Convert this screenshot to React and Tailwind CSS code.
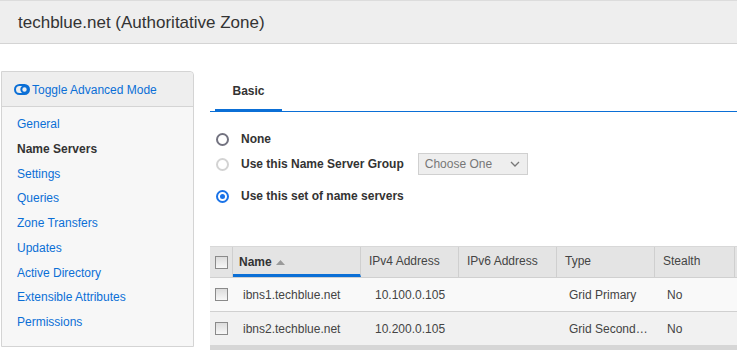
const navItems = [
  "General",
  "Name Servers",
  "Settings",
  "Queries",
  "Zone Transfers",
  "Updates",
  "Active Directory",
  "Extensible Attributes",
  "Permissions",
];

const columns = [
  ["IPv4 Address", "w-[98px]"],
  ["IPv6 Address", "w-[98px]"],
  ["Type", "w-[98px]"],
  ["Stealth", "w-[80px]"],
];

const rows = [
  ["ibns1.techblue.net", "10.100.0.105", "", "Grid Primary", "No", "bg-[#f9f9f9]"],
  ["ibns2.techblue.net", "10.200.0.105", "", "Grid Second…", "No", "bg-[#f1f1f1]"],
];

const Checkbox = () => (
  <span className="block w-[13px] h-[13px] border border-[#8a8a8a] bg-gradient-to-b from-[#dcdcdc] to-[#f7f7f7]" />
);

const Radio = ({ state }) => {
  if (state === "checked")
    return (
      <span className="flex items-center justify-center w-[13px] h-[13px] rounded-full border-2 border-[#1a73e8]">
        <span className="w-[5px] h-[5px] rounded-full bg-[#1a73e8]" />
      </span>
    );
  if (state === "disabled")
    return <span className="block w-[13px] h-[13px] rounded-full border-2 border-[#d3d3d3]" />;
  return <span className="block w-[13px] h-[13px] rounded-full border-2 border-[#737380]" />;
};

const ToggleIcon = () => (
  <svg width="16" height="11" viewBox="0 0 16 11" className="mr-[2px]">
    <rect x="1" y="1" width="14" height="9" rx="4.5" fill="none" stroke="#0b6fd6" strokeWidth="2" />
    <circle cx="10.5" cy="5.5" r="3.2" fill="none" stroke="#0b6fd6" strokeWidth="2" />
  </svg>
);

export default function App() {
  return (
    <div className="w-[737px] h-[350px] overflow-hidden bg-white text-[#333] font-['Liberation_Sans',Arial,sans-serif]">
      {/* header */}
      <div className="h-[44px] bg-[#eeeeee] border-t border-[#dcdcdc] border-b border-b-[#d4d4d4] flex items-center pl-[18px]">
        <h1 className="text-[17px] text-[#333] leading-none">techblue.net (Authoritative Zone)</h1>
      </div>

      <div className="flex">
        {/* sidebar */}
        <div className="ml-[1px] mt-[27px] w-[193px] h-[276px] border border-[#d4d4d4] rounded-tr-[4px] bg-[#f7f7f7] shrink-0">
          <div className="h-[35px] bg-[#eeeeee] border-b border-[#d4d4d4] flex items-center pl-[12px] pt-[1px] text-[12px] text-[#0b6fd6] rounded-tr-[4px]">
            <ToggleIcon />
            Toggle Advanced Mode
          </div>
          <ul className="pt-[8px] pl-[15px] text-[12px]">
            {navItems.map((item) => (
              <li
                key={item}
                className={
                  "h-[24.75px] leading-[18px] " +
                  (item === "Name Servers" ? "font-bold text-[#333]" : "text-[#0b6fd6]")
                }
              >
                {item}
              </li>
            ))}
          </ul>
        </div>

        {/* main */}
        <div className="ml-[16px] flex-1 min-w-0">
          <div className="mt-[36px] h-[32px] border-b border-[#0b6fd6] flex items-end">
            <div className="ml-[5px] w-[67px] h-[32px] flex items-start justify-center border-b-[2px] border-[#0b6fd6] text-[12px] font-bold pt-[3px]">
              Basic
            </div>
          </div>

          <div className="pl-[6px] pt-[18px] text-[12px] font-bold">
            <div className="flex items-center gap-[12px] h-[18px]">
              <Radio />
              <span>None</span>
            </div>
            <div className="flex items-center gap-[12px] h-[22px] mt-[5px]">
              <Radio state="disabled" />
              <span>Use this Name Server Group</span>
              <div className="ml-[2px] w-[110px] h-[22px] bg-[#eeeeee] border border-[#d0d0d0] flex items-center justify-between pl-[6px] pr-[7px] font-normal text-[#777]">
                <span>Choose One</span>
                <svg width="10" height="6" viewBox="0 0 10 6">
                  <path d="M1 1 L5 5 L9 1" fill="none" stroke="#777" strokeWidth="1.3" />
                </svg>
              </div>
            </div>
            <div className="flex items-center gap-[12px] h-[18px] mt-[12px]">
              <Radio state="checked" />
              <span>Use this set of name servers</span>
            </div>
          </div>

          {/* table */}
          <div className="mt-[41px] text-[12px]">
            <div className="flex h-[31px] bg-[#e4e4e4] border-t border-[#d8d8d8]">
              <div className="w-[23px] flex items-center justify-center border-r border-[#cfcfcf]">
                <Checkbox />
              </div>
              <div className="w-[128px] flex items-center pl-[6px] font-bold border-r border-[#cfcfcf] border-b-[3px] border-b-[#0b6fd6] pt-[3px]">
                Name
                <svg width="9" height="6" viewBox="0 0 9 6" className="ml-[4px]">
                  <path d="M0 6 L4.5 1 L9 6 Z" fill="#9a9a9a" />
                </svg>
              </div>
              {columns.map(([label, w]) => (
                <div key={label} className={w + " flex items-center pl-[8px] pb-[3px] border-r border-[#cfcfcf] text-[#444]"}>
                  {label}
                </div>
              ))}
              <div className="flex-1" />
            </div>
            {rows.map(([name, v4, v6, type, stealth, bg]) => (
              <div key={name} className={"flex h-[34px] border-t border-[#d0d0d0] text-[#444] " + bg}>
                <div className="w-[23px] flex items-center justify-center">
                  <Checkbox />
                </div>
                <div className="w-[128px] flex items-center pl-[10px]">{name}</div>
                <div className="w-[98px] flex items-center pl-[14px]">{v4}</div>
                <div className="w-[98px] flex items-center pl-[8px]">{v6}</div>
                <div className="w-[98px] flex items-center pl-[12px]">{type}</div>
                <div className="w-[80px] flex items-center pl-[12px]">{stealth}</div>
                <div className="flex-1" />
              </div>
            ))}
            <div className="h-[8px] bg-[#d6d6d6]" />
          </div>
        </div>
      </div>
    </div>
  );
}
